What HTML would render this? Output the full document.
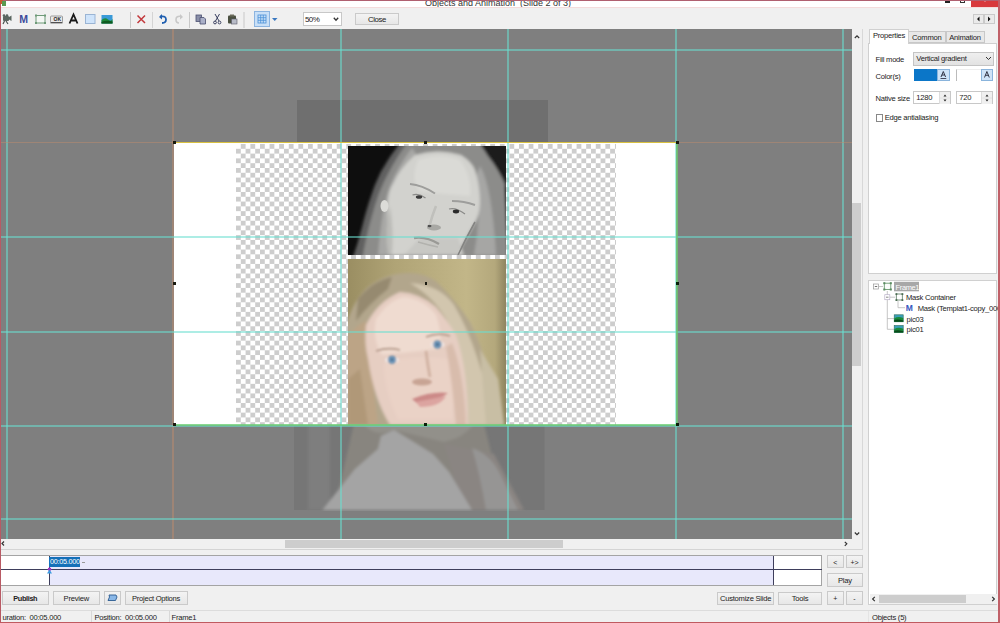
<!DOCTYPE html>
<html><head><meta charset="utf-8">
<style>
*{margin:0;padding:0;box-sizing:border-box}
html,body{width:1000px;height:623px;overflow:hidden;background:#f0f0f0;font-family:"Liberation Sans",sans-serif;font-size:8px;color:#222;position:relative}
.a{position:absolute}
.btn{position:absolute;background:linear-gradient(#f3f3f3,#e7e7e7);border:1px solid #cacaca;text-align:center;font-size:8px;color:#222;line-height:11px;padding-top:0.5px}
.sep{position:absolute;top:12px;width:1px;height:15px;background:#c8c8c8}
.vg{position:absolute;top:0;width:1px;height:510px;background:#4fd0d0}
.hg{position:absolute;left:0;height:1px;width:850px;background:#4fd0d0}
</style></head><body>
<!-- title bar -->
<div class="a" style="left:0;top:0;width:1000px;height:8px;background:#fff;overflow:hidden">
  <div class="a" style="left:425px;top:-1px;font-size:9px;line-height:9px;color:#333;white-space:nowrap">Objects and Animation&nbsp; (Slide 2 of 3)</div>
  <div class="a" style="left:945px;top:1px;width:5px;height:1.5px;background:#222"></div>
  <div class="a" style="left:960px;top:-3px;width:5px;height:6px;border:1px solid #333"></div>
  <div class="a" style="left:971px;top:0;width:27px;height:6.5px;background:#d8393c"></div>
  <svg class="a" style="left:971px;top:0" width="27" height="7"><path d="M11.5 -1.5 L14 1 L16.5 -1.5" stroke="#f8e8e8" stroke-width="1.2" fill="none"/></svg>
</div>
<div class="a" style="left:0;top:7px;width:1000px;height:1px;background:#f4dcdc"></div>
<!-- toolbar -->
<div class="a" style="left:0;top:8px;width:1000px;height:21px;background:#f0f0f0"></div>
<svg class="a" style="left:0;top:8px" width="400" height="21" viewBox="0 8 400 21">
  <!-- camera -->
  <g fill="#5a6660">
    <rect x="3" y="16" width="6" height="5" rx="1"/>
    <path d="M9 17 L11.5 15.5 L11.5 21 L9 19.5Z"/>
    <path d="M4.5 21 L3 24 M6 21 L8 24" stroke="#4a5550" stroke-width="1.2"/>
    <circle cx="4" cy="15.5" r="1.3"/><circle cx="7" cy="15.5" r="1.3"/>
  </g>
  <!-- M -->
  <text x="19.3" y="22.5" font-family="Liberation Sans" font-weight="bold" font-size="10.5" fill="#3d4a9a">M</text>
  <!-- frame -->
  <rect x="36" y="15.5" width="9" height="7.5" fill="#f4f7f4" stroke="#6e9a78" stroke-width="1"/>
  <rect x="35" y="14.5" width="2" height="2" fill="#6e9a78"/><rect x="44" y="14.5" width="2" height="2" fill="#6e9a78"/>
  <rect x="35" y="22" width="2" height="2" fill="#6e9a78"/><rect x="44" y="22" width="2" height="2" fill="#6e9a78"/>
  <!-- OK button -->
  <rect x="50.5" y="16" width="12" height="6.5" rx="1" fill="#e8e8e8" stroke="#888" stroke-width="0.8"/>
  <path d="M50.5 22.8 H62.5" stroke="#333" stroke-width="1"/>
  <text x="53.5" y="21" font-family="Liberation Sans" font-weight="bold" font-size="5" fill="#222">OK</text>
  <!-- A -->
  <path d="M69.5 23.5 L73.5 14.5 L77.5 23.5 M71.5 20.5 H75.5" stroke="#1a1a1a" stroke-width="1.8" fill="none"/>
  <!-- light square -->
  <rect x="85.5" y="14.5" width="9.5" height="9" fill="#cfe4fb" stroke="#9ab4d4" stroke-width="1"/>
  <!-- image -->
  <rect x="101.5" y="15" width="11" height="8.5" fill="#3a9ad8"/>
  <path d="M101.5 20 Q105 17 108 19.5 T112.5 19 V23.5 H101.5Z" fill="#1e8a3a"/>
  <path d="M101.5 22 Q106 20 112.5 21.5 V23.5 H101.5Z" fill="#0f5a20"/>
  <!-- seps -->
  <rect x="130" y="12" width="1" height="16" fill="#c8c8c8"/>
  <rect x="152" y="12" width="1" height="16" fill="#d4d4d4"/>
  <rect x="189" y="12" width="1" height="16" fill="#c8c8c8"/>
  <rect x="243.5" y="12" width="1" height="16" fill="#c8c8c8"/>
  <!-- red x -->
  <path d="M137.5 15.5 L145 23 M145 15.5 L137.5 23" stroke="#c2383c" stroke-width="1.5"/>
  <!-- undo -->
  <path d="M160.5 16.5 Q166 15.5 166 19.5 Q166 23 162 23" stroke="#1f5fb0" stroke-width="1.8" fill="none"/>
  <path d="M159 17 L162 14 L162 19.5Z" fill="#1f5fb0"/>
  <!-- redo -->
  <path d="M181.5 16.5 Q176 15.5 176 19.5 Q176 23 179 23" stroke="#c8c8c8" stroke-width="1.6" fill="none"/>
  <path d="M183 17 L180 14 L180 19.5Z" fill="#c8c8c8"/>
  <!-- copy -->
  <rect x="196" y="15" width="5.5" height="6.5" fill="#8a8fa8" stroke="#4a4f70" stroke-width="0.8"/>
  <path d="M200 17.5 H204 L205.5 19 V24 H200Z" fill="#aab0c8" stroke="#4a4f70" stroke-width="0.8"/>
  <!-- cut -->
  <path d="M215 14 L219 21 M219.5 14 L215.5 21" stroke="#3a4060" stroke-width="1"/>
  <circle cx="215" cy="22.5" r="1.4" fill="none" stroke="#3a4060" stroke-width="1"/>
  <circle cx="219.5" cy="22.5" r="1.4" fill="none" stroke="#3a4060" stroke-width="1"/>
  <!-- paste -->
  <rect x="228" y="15.5" width="8" height="8" rx="1" fill="#4a5040"/>
  <rect x="230" y="14.5" width="4" height="2" fill="#6a6a5a"/>
  <rect x="231.5" y="19" width="5.5" height="5" fill="#b8bcc8" stroke="#5a5a6a" stroke-width="0.6"/>
  <!-- grid button -->
  <rect x="254.5" y="11.5" width="15" height="15" fill="#c9e0f7" stroke="#8cb4e0" stroke-width="1"/>
  <g stroke="#4a90d8" stroke-width="0.8" fill="none">
    <rect x="258" y="15" width="8" height="8"/>
    <path d="M260.7 15 V23 M263.3 15 V23 M258 17.7 H266 M258 20.3 H266"/>
  </g>
  <path d="M272 18 H277.5 L274.75 21Z" fill="#3a78c0"/>
  <!-- combo -->
  <rect x="303.5" y="12.5" width="38" height="13" fill="#fff" stroke="#c8c8c8" stroke-width="1"/>
  <text x="305" y="22.3" font-family="Liberation Sans" font-size="8" letter-spacing="-0.6" fill="#222">50%</text>
  <path d="M333.8 17.8 L336 20.2 L338.2 17.8" stroke="#333" stroke-width="1.3" fill="none"/>
</svg>
<div class="btn" style="left:355px;top:13px;width:44px;height:12px;line-height:10px;font-size:7.8px;letter-spacing:-0.35px">Close</div>
<!-- nav arrows right -->
<div class="btn" style="left:973px;top:14px;width:11px;height:10px;background:#eaeaea"></div>
<div class="btn" style="left:983.5px;top:14px;width:11px;height:10px;background:#eaeaea"></div>
<svg class="a" style="left:973px;top:14px" width="22" height="10"><path d="M4 5 L6.5 2.5 V7.5Z M17.5 5 L15 2.5 V7.5Z" fill="#111"/></svg>

<!-- canvas -->
<div class="a" id="canvas" style="left:1px;top:29px;width:851px;height:509.5px;background:#7f7f7f;overflow:hidden">
<div class="a" style="left:-1px;top:-29px;width:1000px;height:623px">
  <!-- dark top band of picture -->
  <div class="a" style="left:297px;top:100px;width:251px;height:43px;background:#6f6f6f"></div>
  <!-- lower faded image -->
  <svg class="a" style="left:294px;top:424px" width="251" height="87" viewBox="0 0 251 87">
    <defs><filter id="bl3" x="-10%" y="-10%" width="120%" height="120%"><feGaussianBlur stdDeviation="1.5"/></filter></defs>
    <rect width="250.5" height="86" fill="#767676"/>
    <g filter="url(#bl3)">
      <rect x="14" y="0" width="22" height="86" fill="#7e7e7e"/>
      <path d="M60 0 H190 L200 40 L215 86 H40Z" fill="#88857f"/><path d="M70 0 H180 Q170 14 150 18 L100 6 Q80 14 70 0Z" fill="#92908a"/>
      <path d="M150 20 L200 30 L230 86 H170Z" fill="#8a8582"/>
      <path d="M178 24 Q196 30 206 50 L224 86 H192 Q186 50 178 24Z" fill="#969594"/>
      <path d="M28.5 86 L61 45 L84 25 L87 12 L100 6 L118 17 L139 30 L155 48 L178 86Z" fill="#a4a4a4"/>
    </g>
  </svg>
  <!-- white slide -->
  <div class="a" style="left:174px;top:142.5px;width:502px;height:282px;background:#fff"></div>
  <!-- checker -->
  <div class="a" style="left:236px;top:143.5px;width:380px;height:281px;background:conic-gradient(#cdcdcd 25%,#fff 0 50%,#cdcdcd 0 75%,#fff 0) 0 0/9.6px 9.6px"></div>
  <!-- photos placeholder -->
  <div class="a" id="p1" style="left:348px;top:146px;width:157.5px;height:108.5px;background:#0e0e0e;overflow:hidden">
<svg width="158" height="109" viewBox="0 0 158 109" style="display:block">
 <defs>
  <filter id="b2" x="-20%" y="-20%" width="140%" height="140%"><feGaussianBlur stdDeviation="1.4"/></filter>
  <filter id="b1" x="-20%" y="-20%" width="140%" height="140%"><feGaussianBlur stdDeviation="0.7"/></filter>
 </defs>
 <g filter="url(#b2)">
  <!-- hair mass (everything except black bg) -->
  <path d="M53 -4 L131 -4 Q142 10 150 18 L157 38 L160 115 L4 115 Q10 98 14 82 Q18 66 22 54 Q26 40 33 26 Q42 10 53 -4Z" fill="#8c8c8a"/>
  <!-- darker outer strands on left -->
  <path d="M53 -4 Q42 10 33 26 Q26 40 22 54 Q18 66 14 82 Q10 98 4 115 L14 115 Q18 90 24 70 Q30 46 40 28 Q48 12 60 -4Z" fill="#606060"/>
  <!-- lighter inner hair left -->
  <path d="M64 2 Q50 20 42 40 Q34 60 30 109 L40 109 Q38 70 46 44 Q54 24 68 8Z" fill="#a8a8a6"/>
  <!-- top right dark corner -->
  <path d="M131 -4 L160 -4 L160 44 Q150 22 140 10Z" fill="#1c1c1c"/>
  <!-- right hair lighter streaks -->
  <path d="M132 20 Q144 40 148 109 L126 109 Q134 70 128 30Z" fill="#a6a6a4"/>
  <!-- face -->
  <path d="M67 9 Q90 2 113 9 Q124 16 127 24 Q132 40 132 56 Q132 70 125 80 L109 109 L42 109 Q38 80 40 54 Q41 44 45 38 Q52 22 67 9Z" fill="#d2d2ce"/>
  <path d="M70 14 Q92 6 112 14 Q124 30 122 50 L72 46 Q62 34 70 14Z" fill="#dadad6"/>
  <path d="M42 60 Q46 84 44 109 L40 109 Q36 84 42 60Z" fill="#bcbcb8"/>
  <path d="M72 92 L110 92 L116 109 L56 109Z" fill="#c8c8c4"/>
 </g>
 <g filter="url(#b1)">
  <!-- ear -->
  <ellipse cx="36.5" cy="60" rx="4" ry="6" fill="#dcdcd8"/>
  <!-- eyebrows -->
  <path d="M62 38 Q74 39 87 47.5" stroke="#9e9e9c" stroke-width="2" fill="none"/>
  <path d="M104 55 Q116 55 127 59" stroke="#9e9e9c" stroke-width="2" fill="none"/>
  <!-- eyes -->
  <path d="M64.5 49 Q71 47 77.5 52" stroke="#8a8a88" stroke-width="1.2" fill="none"/>
  <ellipse cx="71" cy="51" rx="3.2" ry="1.8" fill="#3a3a3a"/>
  <path d="M101 63 Q108 61 117 68" stroke="#8a8a88" stroke-width="1.2" fill="none"/>
  <ellipse cx="108" cy="65.5" rx="3.2" ry="1.9" fill="#2a2a2a"/>
  <!-- nose -->
  <path d="M88 60 Q84 70 82 78" stroke="#c0c0bc" stroke-width="2.6" fill="none"/>
  <ellipse cx="86" cy="81.5" rx="7" ry="3" fill="#a8a8a4"/>
  <ellipse cx="81.5" cy="80" rx="2" ry="1.3" fill="#505050"/>
  <!-- lips -->
  <path d="M66 92 Q78 90 91 98" stroke="#9a9a96" stroke-width="2.4" fill="none"/>
  <path d="M70 96 Q80 99 90 101" stroke="#b2b2ae" stroke-width="1.6" fill="none"/>
  <!-- hair edge line right -->
  <path d="M127 76 Q118 92 110 109" stroke="#848482" stroke-width="1.6" fill="none"/>
 </g>
</svg></div>
  <div class="a" id="p2" style="left:348px;top:259px;width:157.5px;height:165.5px;background:#b4a87c;overflow:hidden">
<svg width="158" height="166" viewBox="0 0 158 166" style="display:block">
 <defs>
  <linearGradient id="bgx" x1="0" x2="1" y1="0" y2="0">
   <stop offset="0" stop-color="#9a8e62"/><stop offset="0.3" stop-color="#b0a476"/><stop offset="0.75" stop-color="#c2b688"/><stop offset="0.93" stop-color="#b4a87c"/><stop offset="1" stop-color="#8e8460"/>
  </linearGradient>
  <filter id="c3" x="-20%" y="-20%" width="140%" height="140%"><feGaussianBlur stdDeviation="1.5"/></filter>
  <filter id="c15" x="-30%" y="-30%" width="160%" height="160%"><feGaussianBlur stdDeviation="1"/></filter>
 </defs>
 <rect width="158" height="166" fill="url(#bgx)"/>
 <g filter="url(#c3)">
  <!-- hair mass -->
  <path d="M-2 66 Q6 40 20 28 Q38 14 60 14 Q80 14 92 26 Q108 42 122 63 Q136 90 148 140 L154 170 L-2 170Z" fill="#b2a68c"/>
  <path d="M10 40 Q24 22 44 18 L40 30 Q22 44 8 62Z" fill="#968a70"/>
  <path d="M-2 80 Q8 66 18 62 L30 166 L-2 166Z" fill="#bca486"/>
  <path d="M0 120 L12 110 L20 166 L0 166Z" fill="#b09878"/>
  <path d="M62 24 Q92 26 106 46 Q132 90 146 166 L120 166 Q116 110 104 72 Q92 42 62 24Z" fill="#d2c6ae"/>
  <path d="M132 90 L150 120 L156 166 L138 166Z" fill="#c8bea4"/>
  <!-- face -->
  <path d="M18 66 Q30 42 52 33 Q72 34 88 48 Q100 62 108 76 Q120 110 120 166 L42 166 Q26 140 20 100 Q16 84 18 66Z" fill="#e6cec2"/>
  <path d="M28 60 Q42 40 56 38 Q76 40 88 56 Q96 80 90 90 L34 96 Q24 80 28 60Z" fill="#efdbd0"/>
  <path d="M36 104 Q60 96 100 100 Q108 130 104 160 L50 160 Q36 130 36 104Z" fill="#ead2c6"/>
  <path d="M104 84 Q116 114 118 166 L108 166 Q104 120 98 88Z" fill="#d8bcac"/>
 </g>
 <g filter="url(#c15)">
  <path d="M28 92 Q40 88 52 91" stroke="#b49a8a" stroke-width="1.8" fill="none"/>
  <path d="M78 78 Q90 73 102 77" stroke="#b49a8a" stroke-width="1.8" fill="none"/>
  <ellipse cx="44" cy="101" rx="7" ry="3.6" fill="#efe6e4"/>
  <ellipse cx="89.5" cy="85.5" rx="7" ry="3.6" fill="#efe6e4"/>
  <circle cx="44" cy="100.7" r="4" fill="#4a6a88"/>
  <circle cx="89.4" cy="85.5" r="4" fill="#4a6a88"/>
  <circle cx="44" cy="100.7" r="3.2" fill="#74a2c8"/>
  <circle cx="89.4" cy="85.5" r="3.2" fill="#74a2c8"/>
  <circle cx="44" cy="100.7" r="1.2" fill="#2a3a50"/>
  <circle cx="89.4" cy="85.5" r="1.2" fill="#2a3a50"/>
  <path d="M78 92 Q80 108 82 118" stroke="#d2b4a4" stroke-width="3" fill="none"/>
  <ellipse cx="74" cy="123" rx="10" ry="3.5" fill="#c8a494"/>
  <path d="M64 140 Q84 132 100 134 Q90 142 70 145Z" fill="#cc8a88"/>
  <path d="M68 143 Q84 140 98 137 Q92 148 72 148Z" fill="#dca4a0"/>
 </g>
</svg></div>
  <!-- guides -->
  <div class="a" style="left:5.7px;top:0;width:2px;height:623px;background:rgba(105,222,208,0.55)"></div>
  <div class="a" style="left:340.2px;top:0;width:2px;height:623px;background:rgba(105,222,208,0.55)"></div>
  <div class="a" style="left:507.4px;top:0;width:2px;height:623px;background:rgba(105,222,208,0.55)"></div>
  <div class="a" style="left:674.7px;top:0;width:2px;height:623px;background:rgba(105,222,208,0.55)"></div>
  <div class="a" style="left:842px;top:0;width:2px;height:623px;background:rgba(105,222,208,0.55)"></div>
  <div class="a" style="left:171.8px;top:0;width:2.2px;height:623px;background:rgba(190,140,110,0.5)"></div>
  <div class="a" style="left:0;top:48.6px;width:1000px;height:2px;background:rgba(105,222,208,0.55)"></div>
  <div class="a" style="left:0;top:236.1px;width:1000px;height:2px;background:rgba(105,222,208,0.55)"></div>
  <div class="a" style="left:0;top:330.6px;width:1000px;height:2px;background:rgba(105,222,208,0.55)"></div>
  <div class="a" style="left:0;top:518.1px;width:1000px;height:2px;background:rgba(105,222,208,0.55)"></div>
  <div class="a" style="left:0;top:141.5px;width:1000px;height:1.8px;background:rgba(190,140,110,0.5)"></div>
  <div class="a" style="left:0;top:424.5px;width:1000px;height:2px;background:rgba(105,222,208,0.55)"></div>
  <!-- selection border -->
  <div class="a" style="left:174px;top:141.8px;width:503px;height:1.5px;background:#d8c040"></div>
  <div class="a" style="left:174px;top:424px;width:503px;height:1.5px;background:rgba(110,205,120,0.8)"></div>
  <div class="a" style="left:676px;top:142px;width:1.5px;height:283px;background:rgba(110,200,110,0.75)"></div>
  <!-- handles -->
  <div class="a" style="left:172.5px;top:141px;width:3px;height:3px;background:#1a1a10"></div>
  <div class="a" style="left:424px;top:141px;width:3px;height:3px;background:#1a1a10"></div>
  <div class="a" style="left:675.5px;top:141px;width:3px;height:3px;background:#1a1a10"></div>
  <div class="a" style="left:172.5px;top:282px;width:3px;height:3px;background:#1a1a10"></div>
  <div class="a" style="left:675.5px;top:282px;width:3px;height:3px;background:#0a200a"></div>
  <div class="a" style="left:172.5px;top:422.5px;width:3px;height:3px;background:#1a1a10"></div>
  <div class="a" style="left:424px;top:422.5px;width:3px;height:3px;background:#0a200a"></div>
  <div class="a" style="left:675.5px;top:422.5px;width:3px;height:3px;background:#0a200a"></div>
  <div class="a" style="left:424.5px;top:282px;width:2.5px;height:2.5px;background:#1a1a10"></div>
</div>
</div>
<!-- canvas scrollbars -->
<div class="a" style="left:852px;top:29px;width:10px;height:520px;background:#f0f0f0"></div>
<div class="a" style="left:852px;top:203px;width:9.3px;height:163px;background:#cdcdcd"></div>
<div class="a" style="left:861.5px;top:29px;width:1px;height:521px;background:#d8d8d8"></div>
<div class="a" style="left:0;top:538.5px;width:862px;height:10.5px;background:#f0f0f0"></div>
<div class="a" style="left:285px;top:540px;width:278px;height:8px;background:#cdcdcd"></div>
<div class="a" style="left:0;top:549px;width:862px;height:1px;background:#d4d4d4"></div>

<!-- timeline -->
<div class="a" style="left:0;top:555px;width:822px;height:31px;background:#fff;border:1px solid #a4a4a4"></div>
<div class="a" style="left:49.5px;top:556px;width:724px;height:29px;background:#e8e8fb"></div>
<div class="a" style="left:0;top:568.8px;width:822px;height:1.3px;background:#3e3e5c"></div>
<div class="a" style="left:49px;top:556px;width:1.2px;height:29px;background:#3e3e5c"></div>
<div class="a" style="left:773px;top:556px;width:1.2px;height:29px;background:#3e3e5c"></div>
<div class="a" style="left:49.2px;top:557px;width:30.8px;height:9.8px;background:#1570b8;color:#fff;font-size:7.2px;line-height:9.8px;padding-left:0.8px;letter-spacing:-0.25px">00:05.000</div>
<div class="a" style="left:82px;top:562px;width:2.5px;height:1px;background:#999"></div>
<svg class="a" style="left:45px;top:566px" width="9" height="9"><circle cx="4.5" cy="3.2" r="1.8" fill="#a030c0"/><path d="M4.5 3.5 L7 7.5 H2Z" fill="#3a9ae0"/></svg>
<!-- timeline side buttons -->
<div class="btn" style="left:827px;top:555.2px;width:16.6px;height:13.3px;line-height:11px;font-size:7px">&lt;</div>
<div class="btn" style="left:846.3px;top:555.2px;width:16.4px;height:13.3px;line-height:11px;font-size:7px">+&gt;</div>
<div class="btn" style="left:827px;top:573.3px;width:35.7px;height:13.3px;line-height:11px;font-size:7.6px;letter-spacing:-0.25px">Play</div>
<div class="btn" style="left:827px;top:591.3px;width:16.6px;height:13.3px;line-height:11px;font-size:7px">+</div>
<div class="btn" style="left:846.3px;top:591.3px;width:16.4px;height:13.3px;line-height:11px;font-size:7px">-</div>
<!-- bottom buttons -->
<div class="btn" style="left:2px;top:591.3px;width:46.5px;height:13.3px;line-height:11.5px;font-size:7.3px;font-weight:bold;letter-spacing:-0.35px">Publish</div>
<div class="btn" style="left:52.5px;top:591.3px;width:47.5px;height:13.3px;line-height:11.5px;font-size:7.6px;letter-spacing:-0.25px">Preview</div>
<div class="btn" style="left:104px;top:591.3px;width:16.5px;height:13.3px"></div>
<svg class="a" style="left:104px;top:591.3px" width="17" height="13"><path d="M5 4 H12 L13 6 L11.5 9.5 H4 L5.5 6Z" fill="#8ab8e8" stroke="#2a5a90" stroke-width="0.9"/></svg>
<div class="btn" style="left:124.5px;top:591.3px;width:63px;height:13.3px;line-height:11.5px;font-size:7.6px;letter-spacing:-0.25px">Project Options</div>
<div class="btn" style="left:716.8px;top:591.5px;width:57.5px;height:13px;line-height:11px;font-size:7.6px;letter-spacing:-0.25px">Customize Slide</div>
<div class="btn" style="left:778.4px;top:591.5px;width:43.2px;height:13px;line-height:11px;font-size:7.6px;letter-spacing:-0.25px">Tools</div>
<!-- status bar -->
<div class="a" style="left:0;top:610.3px;width:1000px;height:1px;background:#dcdcdc"></div>
<div class="a" style="left:0;top:611px;width:1000px;height:11px;background:#f0f0f0"></div>
<div class="a" style="left:90.8px;top:611px;width:1px;height:11px;background:#d8d8d8"></div>
<div class="a" style="left:168.5px;top:611px;width:1px;height:11px;background:#d8d8d8"></div>
<div class="a" style="left:868px;top:611px;width:1px;height:11px;background:#e4e4e4"></div>
<div class="a" style="left:2.5px;top:612.8px;font-size:7.6px;letter-spacing:-0.25px;line-height:9px;white-space:nowrap">uration:&nbsp; 00:05.000</div>
<div class="a" style="left:94.5px;top:612.5px;font-size:7.6px;letter-spacing:-0.25px;line-height:9px;white-space:nowrap">Position:&nbsp; 00:05.000</div>
<div class="a" style="left:171.5px;top:612.5px;font-size:7.6px;letter-spacing:-0.25px;line-height:9px;white-space:nowrap">Frame1</div>
<div class="a" style="left:872px;top:612.5px;font-size:7.6px;letter-spacing:-0.25px;line-height:9px;white-space:nowrap">Objects (5)</div>

<!-- right panel -->
<div class="a" style="left:868.2px;top:42.5px;width:129.3px;height:231px;background:#fff;border:1px solid #d0d0d0"></div>
<div class="a" style="left:908px;top:30.5px;width:37.5px;height:12.5px;background:#e8e8e8;border:1px solid #c8c8c8;font-size:7.6px;letter-spacing:-0.25px;line-height:11px;text-align:center">Common</div>
<div class="a" style="left:945.5px;top:30.5px;width:39px;height:12.5px;background:#e8e8e8;border:1px solid #c8c8c8;font-size:7.6px;letter-spacing:-0.25px;line-height:11px;text-align:center">Animation</div>
<div class="a" style="left:868.5px;top:29px;width:40px;height:14.5px;background:#fff;border:1px solid #d0d0d0;border-bottom:none;font-size:7.6px;letter-spacing:-0.25px;line-height:12px;padding-left:3.5px">Properties</div>
<div class="a" style="left:875.5px;top:54.5px;font-size:7.6px;letter-spacing:-0.25px;line-height:9px">Fill mode</div>
<div class="a" style="left:912.8px;top:52.3px;width:80.8px;height:13.3px;background:linear-gradient(#efefef,#e2e2e2);border:1px solid #c4c4c4;font-size:7.6px;letter-spacing:-0.25px;line-height:11px;padding-left:2.5px">Vertical gradient</div>
<svg class="a" style="left:985px;top:56px" width="7" height="5"><path d="M1 1 L3.5 3.5 L6 1" stroke="#333" stroke-width="1" fill="none"/></svg>
<div class="a" style="left:875.5px;top:72px;font-size:7.6px;letter-spacing:-0.25px;line-height:9px">Color(s)</div>
<div class="a" style="left:913.6px;top:68.7px;width:23.6px;height:12.2px;background:#0b76c8"></div>
<div class="a" style="left:937.2px;top:68.7px;width:12.6px;height:12.2px;background:#cfe3f7;border:1px solid #8ab4dc"></div>
<svg class="a" style="left:937.2px;top:68.7px" width="13" height="12"><path d="M4 8 L6.3 2.5 L8.6 8 M4.9 6 H7.7" stroke="#223" stroke-width="0.9" fill="none"/><path d="M3.5 9.5 H9.3" stroke="#223" stroke-width="0.8"/></svg>
<div class="a" style="left:956.2px;top:68.7px;width:24.8px;height:12.2px;background:#fff;border-left:1px solid #bbb;border-top:1px solid #eee"></div>
<div class="a" style="left:981px;top:68.7px;width:11.8px;height:12.2px;background:#cfe3f7;border:1px solid #8ab4dc"></div>
<svg class="a" style="left:981px;top:68.7px" width="12" height="12"><path d="M3.5 8.5 L5.9 2.5 L8.3 8.5 M4.4 6.3 H7.4" stroke="#223" stroke-width="0.9" fill="none"/></svg>
<div class="a" style="left:875.5px;top:93.5px;font-size:7.6px;letter-spacing:-0.25px;line-height:9px">Native size</div>
<div class="a" style="left:913.3px;top:91.3px;width:37.3px;height:13.2px;background:#fff;border:1px solid #c8c8c8;font-size:7.6px;letter-spacing:-0.25px;line-height:11px;padding-left:2px">1280</div>
<div class="a" style="left:938.5px;top:91.8px;width:11.6px;height:12.2px;background:#f0f0f0;border-left:1px solid #ddd"></div>
<svg class="a" style="left:938.5px;top:91.8px" width="12" height="12"><path d="M4.5 4.5 L6 2.5 L7.5 4.5Z M4.5 7.5 L6 9.5 L7.5 7.5Z" fill="#222"/><path d="M1 6 H11" stroke="#ddd" stroke-width="0.8"/></svg>
<div class="a" style="left:956.2px;top:91.3px;width:36.6px;height:13.2px;background:#fff;border:1px solid #c8c8c8;font-size:7.6px;letter-spacing:-0.25px;line-height:11px;padding-left:2px">720</div>
<div class="a" style="left:980.7px;top:91.8px;width:11.6px;height:12.2px;background:#f0f0f0;border-left:1px solid #ddd"></div>
<svg class="a" style="left:980.7px;top:91.8px" width="12" height="12"><path d="M4.5 4.5 L6 2.5 L7.5 4.5Z M4.5 7.5 L6 9.5 L7.5 7.5Z" fill="#222"/><path d="M1 6 H11" stroke="#ddd" stroke-width="0.8"/></svg>
<div class="a" style="left:875.5px;top:113.6px;width:7.5px;height:8px;background:#fff;border:1px solid #888"></div>
<div class="a" style="left:884.7px;top:113px;font-size:7.6px;letter-spacing:-0.25px;line-height:9px">Edge antialiasing</div>

<!-- tree panel -->
<div class="a" style="left:868.2px;top:280px;width:129.3px;height:325px;background:#fff;border:1px solid #d0d0d0"></div>
<svg class="a" style="left:868px;top:280px" width="130" height="60" viewBox="868 280 130 60">
  <g stroke="#b8b8b8" stroke-width="0.8" fill="none">
    <path d="M879 286.5 H883"/>
    <path d="M887.3 291 V329.3 M887.3 318.6 H894 M887.3 329.3 H894"/>
    <path d="M898 301 V307.7 H905"/>
    <path d="M890 297.2 H895"/>
  </g>
  <rect x="873.5" y="284" width="5" height="5" fill="#fff" stroke="#999" stroke-width="0.7"/>
  <path d="M874.8 286.5 H877.2" stroke="#333" stroke-width="0.7"/>
  <rect x="884.8" y="294.7" width="5" height="5" fill="#fff" stroke="#b8b0c8" stroke-width="0.7"/>
  <path d="M886 297.2 H888.5" stroke="#555" stroke-width="0.7"/>
  <rect x="884.3" y="283.2" width="6.5" height="6.3" fill="#fafcfa" stroke="#6a9a70" stroke-width="0.9"/>
  <g fill="#5a8a60"><rect x="883.3" y="282.2" width="2" height="2"/><rect x="889.8" y="282.2" width="2" height="2"/><rect x="883.3" y="288.5" width="2" height="2"/><rect x="889.8" y="288.5" width="2" height="2"/></g>
  <rect x="896.3" y="294" width="6" height="6" fill="none" stroke="#5a7a60" stroke-width="0.8"/>
  <g fill="#4a6a50"><rect x="895.5" y="293.2" width="1.8" height="1.8"/><rect x="901.5" y="293.2" width="1.8" height="1.8"/><rect x="895.5" y="299.2" width="1.8" height="1.8"/><rect x="901.5" y="299.2" width="1.8" height="1.8"/></g>
  <rect x="894" y="281.8" width="25" height="9.5" fill="#a8a8a8"/>
  <text x="895.5" y="289.5" font-family="Liberation Sans" font-size="7.4" letter-spacing="-0.3" fill="#fff">Frame1</text>
  <text x="906" y="300" font-family="Liberation Sans" font-size="7.6" letter-spacing="-0.25" fill="#222">Mask Container</text>
  <text x="905.8" y="311" font-family="Liberation Sans" font-weight="bold" font-size="8.5" fill="#3658c0">M</text>
  <text x="917.7" y="310.5" font-family="Liberation Sans" font-size="7.6" letter-spacing="-0.25" fill="#222">Mask (Templat1-copy_000</text>
  <rect x="894.2" y="314.8" width="9" height="7" fill="#3aa0b8" stroke="#2a6a5a" stroke-width="0.6"/><path d="M894.2 318.5 Q898 316 903.2 318 V321.8 H894.2Z" fill="#1a8a3a"/><path d="M894.2 320 Q898 319 903.2 320.5 V321.8 H894.2Z" fill="#0a4a1a"/>
  <text x="906.5" y="321.5" font-family="Liberation Sans" font-size="7.6" letter-spacing="-0.25" fill="#222">pic03</text>
  <rect x="894.2" y="325.5" width="9" height="7" fill="#3aa0b8" stroke="#2a6a5a" stroke-width="0.6"/><path d="M894.2 329.2 Q898 326.7 903.2 328.7 V332.5 H894.2Z" fill="#1a8a3a"/><path d="M894.2 330.7 Q898 329.7 903.2 331.2 V332.5 H894.2Z" fill="#0a4a1a"/>
  <text x="906.5" y="332.2" font-family="Liberation Sans" font-size="7.6" letter-spacing="-0.25" fill="#222">pic01</text>
</svg>
<div class="a" style="left:869.5px;top:593.8px;width:127px;height:10px;background:#f0f0f0"></div>
<div class="a" style="left:879px;top:594.5px;width:87px;height:8.5px;background:#cdcdcd"></div>
<svg class="a" style="left:869.5px;top:593.8px" width="127" height="10"><path d="M4.8 2.8 L2.6 5 L4.8 7.2 M122.2 2.8 L124.4 5 L122.2 7.2" stroke="#333" stroke-width="1.2" fill="none"/></svg>
<!-- canvas scroll arrows -->
<svg class="a" style="left:852px;top:29px" width="10" height="521"><path d="M2.8 9 L5 6.8 L7.2 9" stroke="#333" stroke-width="1.2" fill="none"/><path d="M2.8 503.5 L5 505.7 L7.2 503.5" stroke="#333" stroke-width="1.2" fill="none"/></svg>
<svg class="a" style="left:0;top:538px" width="862" height="11"><path d="M4 3.5 L2 5.5 L4 7.5" stroke="#333" stroke-width="1.2" fill="none"/><path d="M844.8 3.8 L846.8 5.8 L844.8 7.8" stroke="#333" stroke-width="1.2" fill="none"/></svg>

<!-- red border -->
<div class="a" style="left:0;top:0;width:1.2px;height:623px;background:#b85a64"></div>
<div class="a" style="left:0;top:0;width:1000px;height:1px;background:#b06070"></div>
<div class="a" style="left:998.3px;top:0;width:1.7px;height:623px;background:#c06068"></div>
<div class="a" style="left:0;top:621.6px;width:1000px;height:1.4px;background:#c05a60"></div>
<div class="a" style="left:0;top:0;width:3px;height:4px;background:#c85a30;filter:blur(0.4px)"></div>
<div class="a" style="left:2px;top:1px;width:4px;height:5px;background:#5a9a50;filter:blur(0.5px)"></div>
</body></html>
